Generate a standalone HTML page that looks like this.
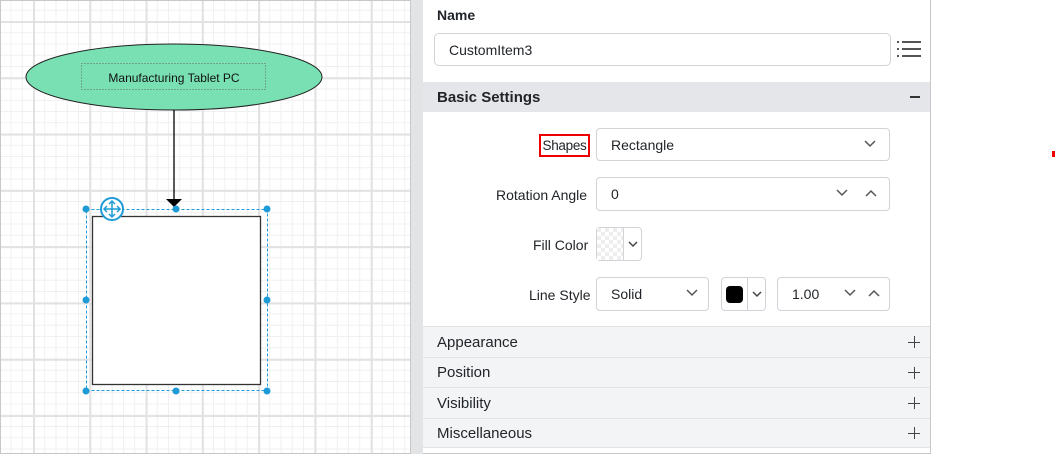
<!DOCTYPE html>
<html><head><meta charset="utf-8"><style>
*{box-sizing:border-box;margin:0;padding:0}
body{width:1055px;height:454px;background:#fff;font-family:"Liberation Sans",sans-serif;position:relative;overflow:hidden;color:#212529}
.abs{position:absolute}
#canvas{left:0;top:0;width:411px;height:454px;border:1px solid #c8c8c8;
background-color:#fff;
background-image:linear-gradient(#e2e2e2 2px,transparent 2px),linear-gradient(90deg,#e2e2e2 2px,transparent 2px),linear-gradient(#f0f0f0 1px,transparent 1px),linear-gradient(90deg,#f0f0f0 1px,transparent 1px);
background-size:56.3px 56.3px,56.3px 56.3px,11.26px 11.26px,11.26px 11.26px;
background-position:0 20px,32px 0,0 20px,32px 0}
#sep{left:411px;top:0;width:12px;height:454px;background:#e3e4e6}
#panel{left:423px;top:0;width:508px;height:454px;border-right:1px solid #c8c8c8;border-bottom:1px solid #c8c8c8;background:#fff}
.lbl{font-size:14px;color:#212529}
.box{position:absolute;border:1px solid #d0d3d8;border-radius:4px;background:#fff;font-size:14px;padding-left:14px;display:flex;align-items:center}
.band{position:absolute;left:0;width:507px;background:#f3f4f6;border-top:1px solid #e1e3e6;font-size:15px;padding-left:14px;display:flex;align-items:center}
.plus{position:absolute;right:10px;top:50%;transform:translateY(-50%);width:12px;height:12px}
.plus:before{content:"";position:absolute;left:0;top:5.5px;width:12px;height:1.3px;background:#444}
.plus:after{content:"";position:absolute;top:0;left:5.5px;height:12px;width:1.3px;background:#444}
.chev{position:absolute}
</style></head><body>
<div id="canvas" class="abs"></div>
<svg class="abs" style="left:0;top:0" width="411" height="454">
<ellipse cx="174" cy="77" rx="148" ry="33" fill="#78e0b2" stroke="#222" stroke-width="1"/>
<rect x="81.5" y="63.5" width="184" height="26" fill="none" stroke="#666" stroke-dasharray="1,2"/>
<text x="174" y="82" text-anchor="middle" font-family="Liberation Sans" font-size="12" fill="#111">Manufacturing Tablet PC</text>
<line x1="174" y1="110" x2="174" y2="200" stroke="#000" stroke-width="1.3"/>
<path d="M166 199 L182 199 L174 207 Z" fill="#000"/>
<rect x="92.5" y="216.5" width="168" height="168" fill="#fff" stroke="#333" stroke-width="1.3"/>
<rect x="86.5" y="209.5" width="181" height="181" fill="none" stroke="#1e9bd7" stroke-dasharray="3,2"/>
<g fill="#1e9bd7">
<circle cx="86" cy="209" r="3.5"/><circle cx="176" cy="209" r="3.5"/><circle cx="267" cy="209" r="3.5"/>
<circle cx="86" cy="300" r="3.5"/><circle cx="267" cy="300" r="3.5"/>
<circle cx="86" cy="391" r="3.5"/><circle cx="176" cy="391" r="3.5"/><circle cx="267" cy="391" r="3.5"/>
</g>
<circle cx="112" cy="209" r="11" fill="#fff" stroke="#1e9bd7" stroke-width="2"/>
<path d="M112 201v16M104 209h16M109 204l3-3 3 3M109 214l3 3 3-3M107 206l-3 3 3 3M117 206l3 3-3 3" fill="none" stroke="#1e9bd7" stroke-width="1.5"/>
</svg>
<div id="sep" class="abs"></div>
<div id="panel" class="abs">
<div class="abs" style="left:14px;top:7px;font-size:14px;font-weight:bold">Name</div>
<div class="box" style="left:11px;top:33px;width:457px;height:33px;border-radius:5px">CustomItem3</div>
<svg class="abs" style="left:474px;top:40px" width="24" height="18"><g stroke="#555" stroke-width="2"><line x1="0" y1="2" x2="2" y2="2"/><line x1="5" y1="2" x2="24" y2="2"/><line x1="0" y1="9" x2="2" y2="9"/><line x1="5" y1="9" x2="24" y2="9"/><line x1="0" y1="16" x2="2" y2="16"/><line x1="5" y1="16" x2="24" y2="16"/></g></svg>
<div class="abs" style="left:0;top:82px;width:507px;height:30px;background:#e5e6e9;font-size:15px;font-weight:bold;padding-left:14px;line-height:31px">Basic Settings<span class="abs" style="right:10px;top:14px;width:10px;height:1.5px;background:#333"></span></div>
<div class="abs lbl" style="left:116px;top:134px;width:51px;height:23px;border:2px solid #e00;font-size:13.5px;line-height:19px;text-align:center;letter-spacing:-0.3px">Shapes</div>
<div class="box" style="left:173px;top:128px;width:294px;height:33px">Rectangle</div>
<svg class="chev" style="left:441px;top:140px" width="12" height="8"><path d="M1 1l5 5 5-5" fill="none" stroke="#555" stroke-width="1.5"/></svg>
<div class="abs lbl" style="left:73px;top:187px">Rotation Angle</div>
<div class="box" style="left:173px;top:177px;width:294px;height:34px">0</div>
<svg class="chev" style="left:413px;top:189px" width="12" height="8"><path d="M1 1l5 5 5-5" fill="none" stroke="#555" stroke-width="1.5"/></svg>
<svg class="chev" style="left:442px;top:189px" width="12" height="8"><path d="M1 7l5-5 5 5" fill="none" stroke="#555" stroke-width="1.5"/></svg>
<div class="abs lbl" style="left:110px;top:237px">Fill Color</div>
<div class="box" style="left:173px;top:227px;width:46px;height:34px;padding:0">
<div style="width:27px;height:100%;border-right:1px solid #d0d3d8;background:repeating-conic-gradient(#eee 0 25%,#fff 0 50%) 4px 8px/8px 8px"></div></div>
<svg class="chev" style="left:205px;top:241px" width="10" height="7"><path d="M1 1l4 4 4-4" fill="none" stroke="#444" stroke-width="1.5"/></svg>
<div class="abs lbl" style="left:106px;top:287px">Line Style</div>
<div class="box" style="left:173px;top:277px;width:113px;height:34px">Solid</div>
<svg class="chev" style="left:263px;top:289px" width="12" height="8"><path d="M1 1l5 5 5-5" fill="none" stroke="#555" stroke-width="1.5"/></svg>
<div class="box" style="left:298px;top:277px;width:45px;height:34px;padding:0">
<div style="width:26px;height:100%;border-right:1px solid #d0d3d8;display:flex;align-items:center;justify-content:center"><div style="width:17px;height:17px;background:#000;border-radius:4px"></div></div></div>
<svg class="chev" style="left:329px;top:291px" width="10" height="7"><path d="M1 1l4 4 4-4" fill="none" stroke="#444" stroke-width="1.5"/></svg>
<div class="box" style="left:354px;top:277px;width:113px;height:34px">1.00</div>
<svg class="chev" style="left:421px;top:289px" width="12" height="8"><path d="M1 1l5 5 5-5" fill="none" stroke="#555" stroke-width="1.5"/></svg>
<svg class="chev" style="left:445px;top:289px" width="12" height="8"><path d="M1 7l5-5 5 5" fill="none" stroke="#555" stroke-width="1.5"/></svg>
<div class="band" style="top:326px;height:31px">Appearance<span class="plus"></span></div>
<div class="band" style="top:357px;height:30px">Position<span class="plus"></span></div>
<div class="band" style="top:387px;height:31px">Visibility<span class="plus"></span></div>
<div class="band" style="top:418px;height:30px;border-bottom:1px solid #e1e3e6">Miscellaneous<span class="plus"></span></div>
</div>
<div class="abs" style="left:1052px;top:151px;width:3px;height:6px;background:#e00"></div>
</body></html>
